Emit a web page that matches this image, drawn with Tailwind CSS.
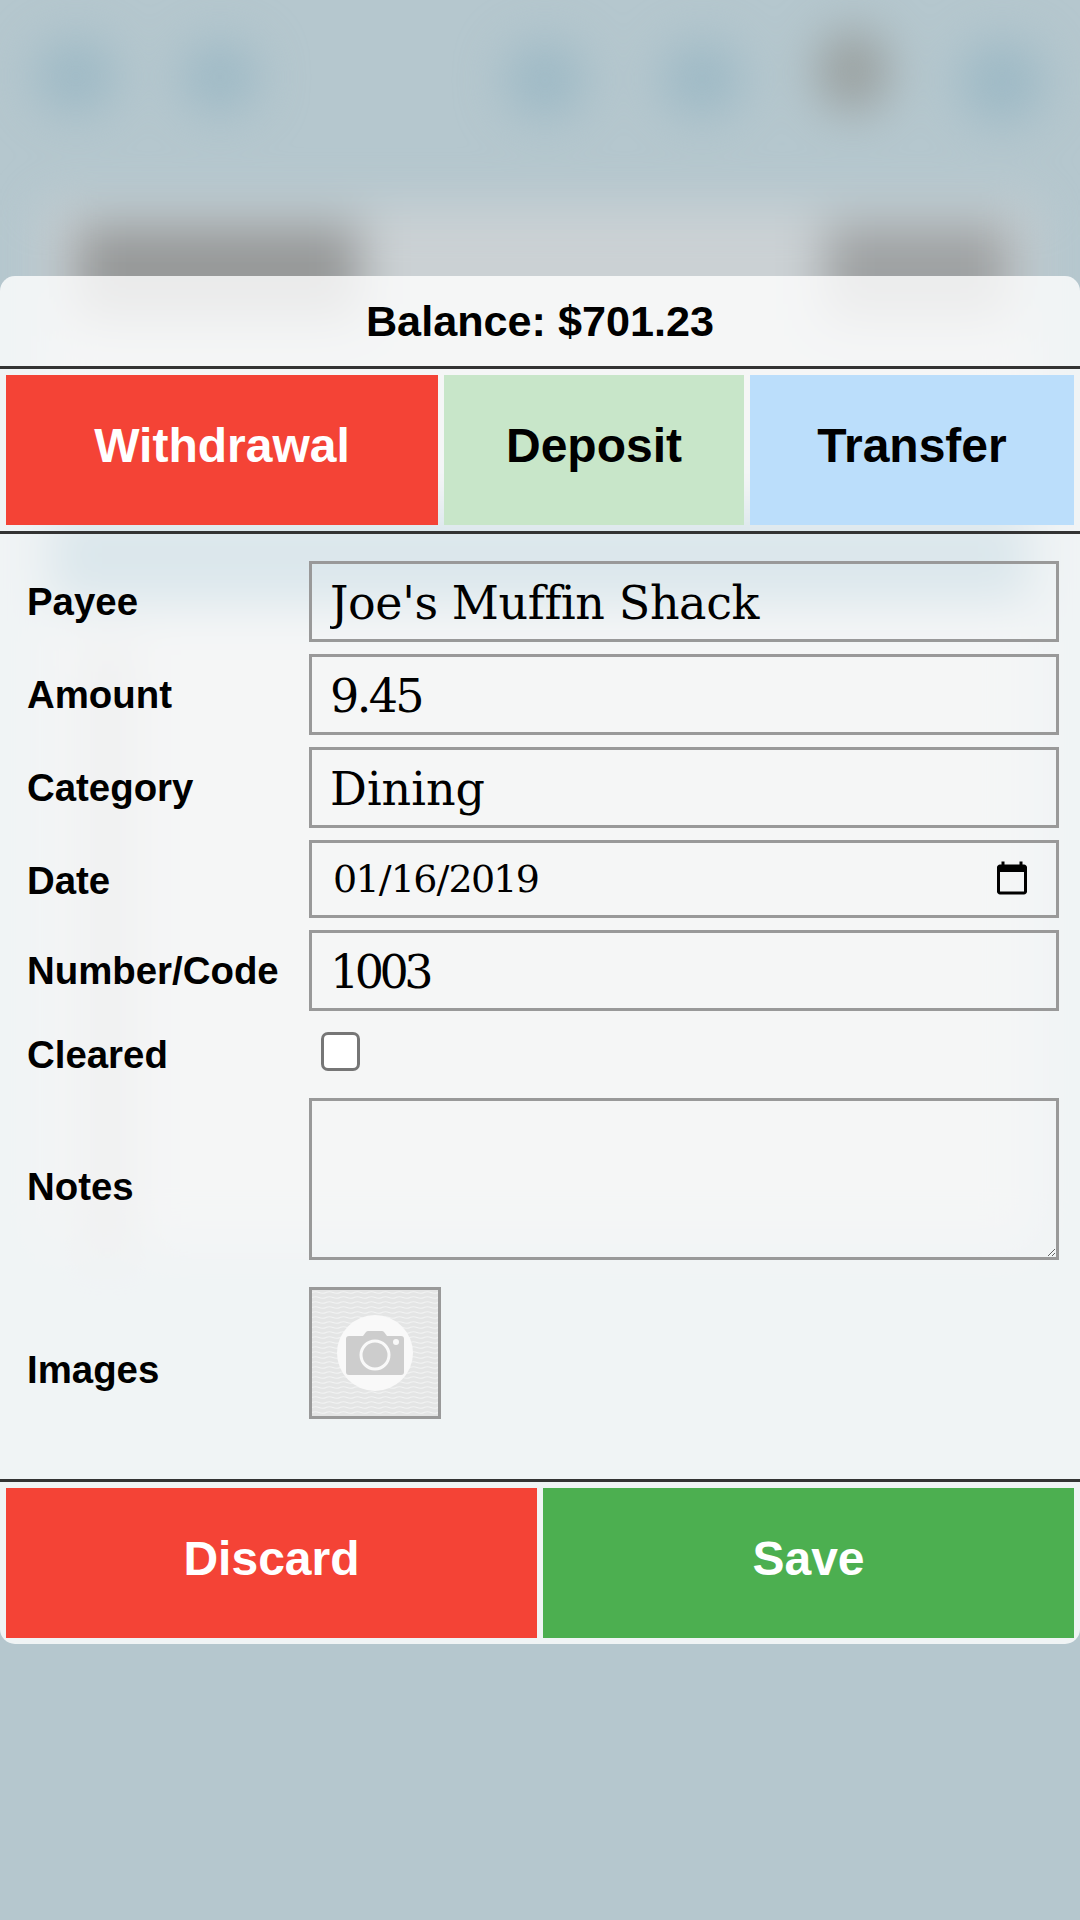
<!DOCTYPE html>
<html lang="en">
<head>
  <meta charset="UTF-8" />
  <meta name="viewport" content="width=device-width, initial-scale=1.0"/>
  <title>Edit Transaction</title>
  <script src="https://cdn.jsdelivr.net/npm/@tailwindcss/browser@4"></script>
</head>
<body class="relative w-[1080px] h-[1920px] overflow-hidden bg-[#b5c7ce] font-['Liberation_Sans',Arial,sans-serif] text-black">

  <!-- blurred page behind the dialog -->
  <div class="absolute inset-0 overflow-hidden blur-[24px]">
    <div class="absolute left-[36px] top-[40px] w-[80px] h-[72px] rounded-full bg-[#9db9c5]"></div>
    <div class="absolute left-[182px] top-[42px] w-[76px] h-[70px] rounded-full bg-[#9db9c5]"></div>
    <div class="absolute left-[505px] top-[42px] w-[80px] h-[76px] rounded-full bg-[#9db9c5]"></div>
    <div class="absolute left-[662px] top-[42px] w-[80px] h-[74px] rounded-full bg-[#9db9c5]"></div>
    <div class="absolute left-[818px] top-[30px] w-[70px] h-[82px] rounded-full bg-[#999f9e]"></div>
    <div class="absolute left-[960px] top-[40px] w-[84px] h-[84px] rounded-full bg-[#9db9c5]"></div>
    <div class="absolute left-[45px] top-[205px] w-[990px] h-[1040px] bg-[#cbd1d4]"></div>
    <div class="absolute left-[75px] top-[225px] w-[285px] h-[95px] bg-[#969898]"></div>
    <div class="absolute left-[825px] top-[225px] w-[185px] h-[95px] bg-[#9ea1a2]"></div>
    <div class="absolute left-[50px] top-[505px] w-[980px] h-[100px] bg-[#4b87a0]"></div>
    <div class="absolute left-[80px] top-[640px] w-[55px] h-[620px] bg-[#b4b7b8]"></div>
  </div>

  <!-- dialog -->
  <div class="relative mt-[276px] h-[1368px] rounded-[15px] bg-white/80">
    <div class="h-[90px] flex items-center justify-center text-[43.2px] font-bold">Balance: $701.23</div>

    <div class="flex gap-[6px] p-[6px] border-y-[3px] border-[#333333]">
      <button class="w-[432px] h-[150px] pb-[9px] bg-[#f44336] text-white text-[48px] font-bold">Withdrawal</button>
      <button class="w-[300px] h-[150px] pb-[9px] bg-[#c8e6c9] text-[48px] font-bold">Deposit</button>
      <button class="w-[324px] h-[150px] pb-[9px] bg-[#bbdefb] text-[48px] font-bold">Transfer</button>
    </div>

    <div class="h-[945px] pt-[27px] px-[27px]">
      <div class="grid grid-cols-[282px_750px] gap-y-[12px] text-[38.4px] font-bold">
        <label class="flex items-center">Payee</label>
        <input type="text" value="Joe's Muffin Shack" class="h-[81px] border-[3px] border-[#999999] pl-[18px] pt-[3px] bg-transparent text-[46px] tracking-[-0.4px] font-normal font-['DejaVu_Serif',serif]" />

        <label class="flex items-center">Amount</label>
        <input type="text" value="9.45" class="h-[81px] border-[3px] border-[#999999] pl-[18px] pt-[3px] bg-transparent text-[46px] tracking-[-2.6px] font-normal font-['DejaVu_Serif',serif]" />

        <label class="flex items-center">Category</label>
        <input type="text" value="Dining" class="h-[81px] border-[3px] border-[#999999] pl-[18px] pt-[3px] bg-transparent text-[46px] font-normal font-['DejaVu_Serif',serif]" />

        <label class="flex items-center pt-[3px]">Date</label>
        <input type="date" value="2019-01-16" class="h-[78px] border-[3px] border-[#999999] pl-[20px] pr-[23px] bg-transparent text-[38px] tracking-[-1.8px] font-normal font-['DejaVu_Serif',serif]" />

        <label class="flex items-center">Number/Code</label>
        <input type="text" value="1003" class="h-[81px] border-[3px] border-[#999999] pl-[18px] pt-[3px] bg-transparent text-[46px] tracking-[-4.5px] font-normal font-['DejaVu_Serif',serif]" />

        <label class="flex items-center">Cleared</label>
        <div class="h-[63px] pt-[9px] pl-[12px]">
          <input type="checkbox" class="block appearance-none w-[39px] h-[39px] border-[3px] border-[#767676] rounded-[7px] bg-white" />
        </div>

        <label class="flex items-center pt-[16px]">Notes</label>
        <textarea class="block h-[162px] border-[3px] border-[#999999] bg-transparent"></textarea>

        <label class="flex items-center pt-[34px] mt-[15px]">Images</label>
        <div class="mt-[15px] w-[132px] h-[132px] border-[3px] border-[#999999]">
          <svg viewBox="0 0 126 126" class="block w-[126px] h-[126px]">
            <defs>
              <pattern id="waves" width="14" height="5" patternUnits="userSpaceOnUse">
                <rect width="14" height="5" fill="#e4e5e5" />
                <path d="M0 2.5 Q3.5 1 7 2.5 T14 2.5" fill="none" stroke="#f2f3f3" stroke-width="1.2" />
              </pattern>
            </defs>
            <rect width="126" height="126" fill="url(#waves)" />
            <circle cx="63" cy="63" r="38" fill="#f9f9f9" />
            <path d="M34 49 a3 3 0 0 1 3 -3 h14 l3 -4 q1 -1 2 -1 h14 q1 0 2 1 l3 4 h14 a3 3 0 0 1 3 3 v33 a3 3 0 0 1 -3 3 h-52 a3 3 0 0 1 -3 -3 z" fill="#cdcdcd" />
            <circle cx="63" cy="65" r="14" fill="none" stroke="#f9f9f9" stroke-width="3" />
            <circle cx="84" cy="52" r="3" fill="#f9f9f9" />
          </svg>
        </div>
      </div>
    </div>

    <div class="flex gap-[6px] p-[6px] border-t-[3px] border-[#333333]">
      <button class="flex-1 h-[150px] pb-[9px] bg-[#f44336] text-white text-[48px] font-bold">Discard</button>
      <button class="flex-1 h-[150px] pb-[9px] bg-[#4caf50] text-white text-[48px] font-bold">Save</button>
    </div>
  </div>
</body>
</html>
